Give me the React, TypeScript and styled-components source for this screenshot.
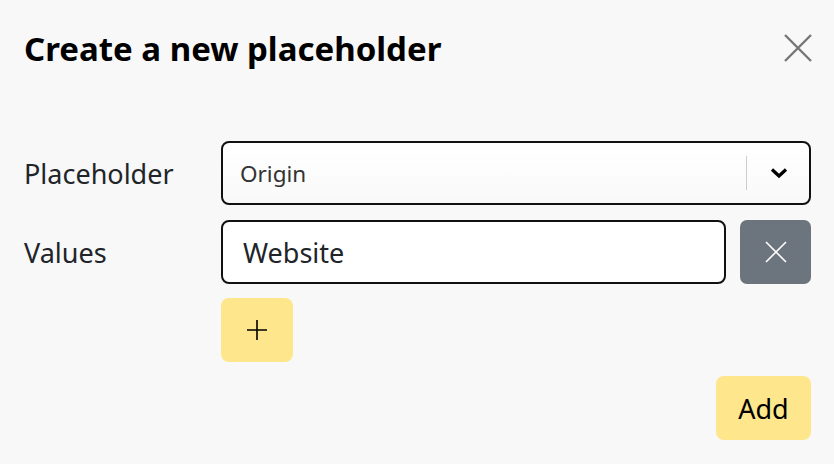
import React from "react";
import styled, { createGlobalStyle } from "styled-components";

const Global = createGlobalStyle`
  html, body { margin: 0; padding: 0; background: #f8f8f8; }
  body { font-family: "Noto Sans", "Open Sans", sans-serif; color: #212529; }
  * { box-sizing: border-box; }
`;

const Modal = styled.div`
  width: 834px;
  height: 464px;
  padding: 0 23px 0 24px;
  display: flex;
  flex-direction: column;
`;

const Header = styled.div`
  height: 96px;
  display: flex;
  align-items: center;
  justify-content: space-between;
`;

const Title = styled.h1`
  margin: 0;
  font-size: 33px;
  font-weight: 700;
  color: #000;
`;

const CloseButton = styled.button`
  width: 28px;
  height: 28px;
  padding: 0;
  border: 0;
  background: transparent;
  display: flex;
  align-items: center;
  justify-content: center;
  margin-right: -1px;
`;

const Body = styled.div`
  padding-top: 45px;
  display: flex;
  flex-direction: column;
  gap: 15px;
`;

const Row = styled.div`
  display: grid;
  grid-template-columns: 197px 1fr;
  align-items: center;
`;

const Label = styled.label`
  font-size: 27px;
  color: #212529;
`;

const Select = styled.div`
  height: 64px;
  border: 2px solid #111;
  border-radius: 8px;
  background: linear-gradient(#ffffff, #f9f9f9);
  display: flex;
  align-items: center;
  padding-left: 17px;
`;

const SelectValue = styled.span`
  flex: 1;
  font-size: 22.5px;
  color: #333;
`;

const Separator = styled.span`
  width: 1px;
  height: 34px;
  background: #ccc;
`;

const Chevron = styled.span`
  width: 62px;
  display: flex;
  justify-content: center;
  align-items: center;
  padding-left: 2px;
`;

const ValueLine = styled.div`
  display: flex;
  gap: 14px;
`;

const TextInput = styled.div`
  flex: 1;
  height: 64px;
  border: 2px solid #111;
  border-radius: 8px;
  background: #fff;
  display: flex;
  align-items: center;
  padding-left: 20px;
  font-size: 27px;
  color: #212529;
`;

const RemoveButton = styled.button`
  width: 71px;
  height: 64px;
  border: 0;
  border-radius: 7px;
  background: #6c757d;
  display: flex;
  align-items: center;
  justify-content: center;
  padding: 0;
`;

const YellowButton = styled.button<{ $wide?: boolean }>`
  height: 64px;
  min-width: ${(p) => (p.$wide ? "95px" : "72px")};
  padding: 0 ${(p) => (p.$wide ? "20px" : "0")};
  border: 0;
  border-radius: 8px;
  background: #fde68b;
  color: #000;
  font-family: "Noto Sans", "Open Sans", sans-serif;
  font-size: 27px;
  display: flex;
  align-items: center;
  justify-content: center;
`;

const AddLine = styled.div`
  display: flex;
  margin-top: -1px;
`;

const Footer = styled.div`
  display: flex;
  justify-content: flex-end;
  padding-top: 14px;
`;

export default function App() {
  return (
    <>
      <Global />
      <Modal>
        <Header>
          <Title>Create a new placeholder</Title>
          <CloseButton aria-label="Close">
            <svg width="28" height="28" viewBox="0 0 28 28">
              <path d="M1 1 L27 27 M27 1 L1 27" stroke="#777" strokeWidth="2.4" />
            </svg>
          </CloseButton>
        </Header>
        <Body>
          <Row>
            <Label>Placeholder</Label>
            <Select>
              <SelectValue>Origin</SelectValue>
              <Separator />
              <Chevron>
                <svg width="18" height="12" viewBox="0 0 18 12">
                  <path d="M2 2.5 L9 9 L16 2.5" fill="none" stroke="#000" strokeWidth="3.2" />
                </svg>
              </Chevron>
            </Select>
          </Row>
          <Row>
            <Label>Values</Label>
            <ValueLine>
              <TextInput>Website</TextInput>
              <RemoveButton aria-label="Remove">
                <svg width="22" height="22" viewBox="0 0 22 22">
                  <path d="M1 1 L21 21 M21 1 L1 21" stroke="#fff" strokeWidth="1.6" />
                </svg>
              </RemoveButton>
            </ValueLine>
          </Row>
          <Row>
            <span />
            <AddLine>
              <YellowButton aria-label="Add value">
                <svg width="22" height="22" viewBox="0 0 22 22">
                  <path d="M11 1 V21 M1 11 H21" stroke="#000" strokeWidth="1.6" />
                </svg>
              </YellowButton>
            </AddLine>
          </Row>
        </Body>
        <Footer>
          <YellowButton $wide>Add</YellowButton>
        </Footer>
      </Modal>
    </>
  );
}
